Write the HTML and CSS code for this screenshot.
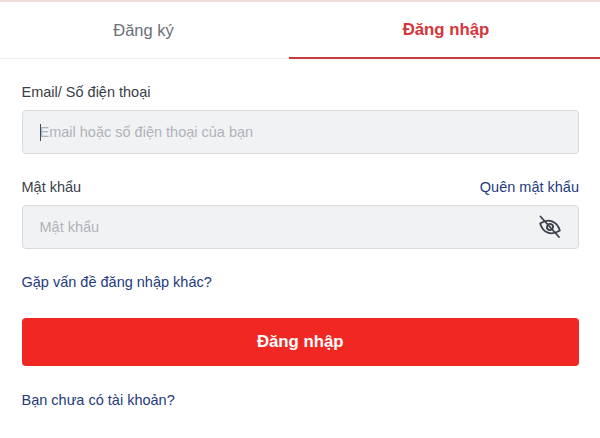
FILE: index.html
```html
<!DOCTYPE html>
<html lang="vi">

<head>
    <meta charset="UTF-8">
    <title>Đăng nhập</title>
    <link rel="stylesheet" href="styles.css">
</head>

<body>
    <div class="topline"></div>
    <div class="tabs">
        <a class="tab" href="#">Đăng ký</a>
        <a class="tab active" href="#">Đăng nhập</a>
    </div>
    <form class="form">
        <div class="label-row email-label">
            <label>Email/ Số điện thoại</label>
        </div>
        <div class="field">
            <span class="caret"></span>
            <span class="placeholder">Email hoặc số điện thoại của bạn</span>
        </div>
        <div class="label-row pass-label">
            <label>Mật khẩu</label>
            <a class="link" href="#">Quên mật khẩu</a>
        </div>
        <div class="field">
            <span class="placeholder">Mật khẩu</span>
            <svg class="eye" viewBox="0 0 24 24" width="24" height="24" fill="none" stroke="#3b4149" stroke-width="1.8" stroke-linecap="round" stroke-linejoin="round">
                <g transform="rotate(20 12 12)">
                    <path d="M1.500 12C4.500 8 8 6 12 6s7.500 2 10.500 6c-3 4-6.500 6-10.500 6S4.500 16 1.500 12z"/>
                    <circle cx="12" cy="12" r="3"/>
                </g>
                <path d="M2.500 1.500L21 22"/>
            </svg>
        </div>
        <a class="link other" href="#">Gặp vấn đề đăng nhập khác?</a>
        <button class="submit" type="button">Đăng nhập</button>
        <a class="link register" href="#">Bạn chưa có tài khoản?</a>
    </form>
</body>

</html>
```

FILE: styles.css
```css
* {
    box-sizing: border-box;
}

body {
    margin: 0;
    height: 438px;
    background: #fff;
    font-family: "Liberation Sans", Arial, sans-serif;
    font-size: 14.5px;
    color: #3a4048;
    overflow: hidden;
}

.topline {
    height: 2px;
    background: #efdcda;
}

.tabs {
    display: flex;
    height: 57px;
    border-bottom: 1px solid #eeeeee;
}

.tab {
    width: 289px;
    height: 57px;
    padding-right: 2px;
    line-height: 56px;
    text-align: center;
    font-size: 16.5px;
    color: #6b7078;
    text-decoration: none;
}

.tab.active {
    flex: 1;
    padding: 0 0 0 3px;
    color: #d6353a;
    font-size: 16.8px;
    font-weight: bold;
    border-bottom: 2px solid #c8393c;
}

.form {
    display: flex;
    flex-direction: column;
    padding: 0 21px 0 21.5px;
}

.label-row {
    display: flex;
    justify-content: space-between;
    align-items: center;
    height: 18px;
}

.email-label {
    margin-top: 24px;
    margin-bottom: 9px;
}

.pass-label {
    margin-top: 24px;
    margin-bottom: 9px;
}

.field {
    display: flex;
    align-items: center;
    position: relative;
    height: 44px;
    padding: 0 17px;
    background: #f1f2f4;
    border: 1px solid #d9dadd;
    border-radius: 4px;
}

.caret {
    position: absolute;
    left: 17px;
    top: 13px;
    width: 1px;
    height: 17px;
    background: #3a4a60;
}

.placeholder {
    color: #b0b3b9;
}

.eye {
    margin-left: auto;
    margin-right: -1px;
}

.link {
    color: #243a7d;
    text-decoration: none;
}

.other {
    margin-top: 24px;
    line-height: 18px;
}

.submit {
    height: 48px;
    margin-top: 27px;
    border: 0;
    border-radius: 4px;
    background: #f02723;
    color: #fff;
    font-family: inherit;
    font-size: 16.8px;
    font-weight: bold;
}

.register {
    margin-top: 25px;
    line-height: 18px;
}
```
